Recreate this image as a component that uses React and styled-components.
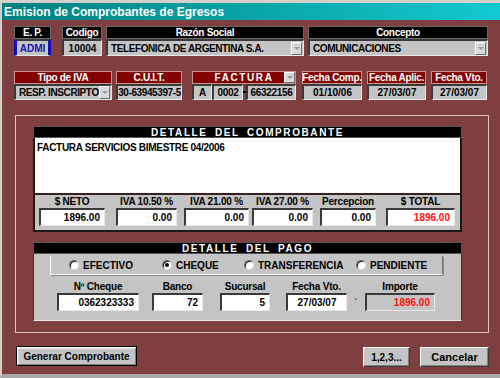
import styled, { createGlobalStyle } from 'styled-components';

const GlobalStyle = createGlobalStyle`
  body {
    margin: 0;
    font-family: "Liberation Sans", Arial, sans-serif;
  }
  * { box-sizing: border-box; }
`;

const Window = styled.div`
  width: 500px;
  height: 378px;
  background: #7f3f40;
  border-top: 3px solid #d4d0c8;
  border-left: 2px solid #d4d0c8;
  border-bottom: 4px solid #a8a8a8;
  display: flex;
  flex-direction: column;
  font-weight: bold;
  font-size: 10px;
`;

const TitleBar = styled.div`
  height: 17px;
  background: linear-gradient(to right, #00807f, #12c9d0);
  color: #fff;
  font-size: 12px;
  padding-left: 2px;
  display: flex;
  align-items: center;
`;

const Body = styled.div`
  flex: 1;
  display: flex;
  flex-direction: column;
  padding: 6px 0 0 12px;
`;

const Row = styled.div`
  display: flex;
  align-items: flex-start;
  margin-top: ${p => p.$mt || 0}px;
`;

const Field = styled.div`
  width: ${p => p.$w}px;
  margin-left: ${p => p.$ml || 0}px;
  display: flex;
  flex-direction: column;
`;

const HeadLabel = styled.div`
  height: 13px;
  background: ${p => (p.$red ? '#820202' : '#000')};
  border: 1px solid ${p => (p.$red ? '#c89090' : '#6a6a6a')};
  color: #fff;
  font-size: 10px;
  letter-spacing: ${p => p.$spread ?? -0.3}px;
  white-space: nowrap;
  display: flex;
  align-items: center;
  justify-content: center;
  position: relative;
`;

const Value = styled.div`
  height: ${p => p.$h || 17}px;
  width: ${p => (p.$w ? `${p.$w}px` : 'auto')};
  background: #c4c4c4;
  border-top: 2px solid #3a3a3a;
  border-left: 2px solid #3a3a3a;
  border-bottom: 1px solid #e8e8e8;
  border-right: 1px solid #e8e8e8;
  color: #000;
  display: flex;
  align-items: center;
  justify-content: ${p => p.$align || 'center'};
  padding: 0 3px;
  white-space: nowrap;
  overflow: hidden;
  letter-spacing: ${p => p.$ls || 0}px;
`;

const EpValue = styled(Value)`
  border-left: 3px solid #1010b8;
  border-right: 3px solid #1010b8;
  color: #1414b4;
`;

const ComboText = styled.span`
  flex: 1;
`;

const DropBtn = styled.span`
  width: 11px;
  height: 13px;
  background: #d8d8d8;
  border-top: 1px solid #fff;
  border-left: 1px solid #fff;
  border-bottom: 1px solid #707070;
  border-right: 1px solid #707070;
  display: flex;
  align-items: center;
  justify-content: center;
  flex-shrink: 0;
  margin-right: -2px;
  &::after {
    content: '';
    border-left: 3px solid transparent;
    border-right: 3px solid transparent;
    border-top: 3px solid #9a9a9a;
  }
`;

const LabelBtn = styled(DropBtn)`
  position: absolute;
  right: 0;
  top: 0;
  height: 11px;
  margin: 0;
`;

const Parts = styled.div`
  display: flex;
  align-items: center;
`;

const Dash = styled.span`
  width: 3px;
  height: 2px;
  background: #000;
`;

const Frame = styled.div`
  width: 474px;
  height: 218px;
  margin: 15px 0 0 1px;
  border: 1px solid #e2c4c4;
  padding: 10px 0 0 17px;
  display: flex;
  flex-direction: column;
`;

const Section = styled.div`
  width: 429px;
  margin-top: ${p => p.$mt || 0}px;
  display: flex;
  flex-direction: column;
`;

const SectionHead = styled.div`
  height: 12px;
  background: #000;
  border: 1px solid #555;
  color: #fff;
  font-size: 10px;
  letter-spacing: 1.6px;
  word-spacing: 3px;
  display: flex;
  align-items: center;
  justify-content: center;
`;

const TextArea = styled.div`
  height: 55px;
  background: #fff;
  border-left: 2px solid #1a1a1a;
  border-right: 2px solid #1a1a1a;
  padding: 4px 2px;
  color: #000;
  letter-spacing: -0.3px;
`;

const Totals = styled.div`
  height: 39px;
  background: #c4c4c4;
  border: 2px solid #1a1a1a;
  border-top-color: #3a2020;
  display: flex;
  padding: 1px 0 0 4px;
`;

const SmallField = styled.div`
  width: ${p => p.$w}px;
  margin-left: ${p => p.$ml || 0}px;
  display: flex;
  flex-direction: column;
`;

const SmallLabel = styled.div`
  height: 12px;
  color: #000;
  font-size: 10px;
  text-align: center;
  white-space: nowrap;
  line-height: 12px;
  letter-spacing: -0.2px;
`;

const Input = styled.div`
  height: 18px;
  background: ${p => (p.$gray ? '#c4c4c4' : '#fff')};
  border-top: 2px solid #3a3a3a;
  border-left: 2px solid #3a3a3a;
  border-bottom: 1px solid #e8e8e8;
  border-right: 1px solid #e8e8e8;
  color: ${p => (p.$red ? '#ff1010' : '#000')};
  display: flex;
  align-items: center;
  justify-content: ${p => (p.$center ? 'center' : 'flex-end')};
  padding: 0 4px;
`;

const PayPanel = styled.div`
  height: 67px;
  background: #c4c4c4;
  border-left: 1px solid #3a2a2a;
  border-right: 1px solid #3a2a2a;
  border-bottom: 1px solid #e8e8e8;
  display: flex;
  flex-direction: column;
  padding-top: 2px;
`;

const RadioBox = styled.div`
  width: 393px;
  height: 19px;
  margin-left: 16px;
  border-left: 1px solid #fff;
  border-bottom: 1px solid #fff;
  border-right: 1px solid #7a7a7a;
  box-shadow: 1px 1px 0 #8a8a8a;
  display: flex;
  align-items: center;
  padding-left: 18px;
`;

const RadioItem = styled.div`
  width: ${p => p.$w}px;
  display: flex;
  align-items: center;
  gap: 4px;
  color: #000;
`;

const Circle = styled.span`
  width: 10px;
  height: 10px;
  border-radius: 50%;
  background: #fff;
  border: 1px solid;
  border-color: #6a6a6a #e0e0e0 #e0e0e0 #6a6a6a;
  box-shadow: inset 1px 1px 0 #222;
  display: flex;
  align-items: center;
  justify-content: center;
  &::after {
    content: '';
    width: 4px;
    height: 4px;
    border-radius: 50%;
    background: ${p => (p.$on ? '#000' : 'transparent')};
  }
`;

const PayFields = styled.div`
  display: flex;
  align-items: flex-end;
  margin: 6px 0 0 23px;
`;

const Dot = styled.span`
  width: 18px;
  text-align: center;
  color: #555;
  padding-bottom: 6px;
`;

const Buttons = styled.div`
  display: flex;
  align-items: flex-start;
  margin-top: 13px;
  padding-left: 2px;
`;

const MainButton = styled.button`
  width: 121px;
  height: 20px;
  background: #c4c4c4;
  border: 1px solid #000;
  box-shadow: inset 1px 1px 0 #fff, inset -1px -1px 0 #808080, inset 2px 2px 0 #e0e0e0;
  font: bold 10px "Liberation Sans", Arial, sans-serif;
  color: #000;
  padding: 0;
`;

const Button = styled.button`
  width: ${p => p.$w}px;
  height: 20px;
  margin-left: ${p => p.$ml || 0}px;
  margin-top: 1px;
  background: #c4c4c4;
  border: 1px solid;
  border-color: #fff #3a3a3a #3a3a3a #fff;
  box-shadow: inset -1px -1px 0 #808080;
  font: bold ${p => p.$fs || 10}px "Liberation Sans", Arial, sans-serif;
  color: #000;
  padding: 0;
`;

const totals = [
  { label: '$ NETO', value: '1896.00', w: 66, ml: 0 },
  { label: 'IVA  10.50 %', value: '0.00', w: 61, ml: 11 },
  { label: 'IVA  21.00 %', value: '0.00', w: 65, ml: 7 },
  { label: 'IVA  27.00 %', value: '0.00', w: 61, ml: 3 },
  { label: 'Percepcion', value: '0.00', w: 56, ml: 7 },
  { label: '$ TOTAL', value: '1896.00', w: 69, ml: 10, red: true },
];

const radios = [
  { label: 'EFECTIVO', w: 93 },
  { label: 'CHEQUE', w: 82, on: true },
  { label: 'TRANSFERENCIA', w: 112 },
  { label: 'PENDIENTE', w: 80 },
];

export default function App() {
  return (
    <Window>
      <GlobalStyle />
      <TitleBar>Emision de Comprobantes de Egresos</TitleBar>
      <Body>
        <Row>
          <Field $w={37}>
            <HeadLabel>E. P.</HeadLabel>
            <EpValue>ADMI</EpValue>
          </Field>
          <Field $w={40} $ml={11}>
            <HeadLabel>Codigo</HeadLabel>
            <Value>10004</Value>
          </Field>
          <Field $w={198} $ml={4}>
            <HeadLabel>Razón Social</HeadLabel>
            <Value $align="flex-start" $ls={-0.4}>
              <ComboText>TELEFONICA DE ARGENTINA S.A.</ComboText>
              <DropBtn />
            </Value>
          </Field>
          <Field $w={180} $ml={4}>
            <HeadLabel>Concepto</HeadLabel>
            <Value $align="flex-start" $ls={-0.4}>
              <ComboText>COMUNICACIONES</ComboText>
              <DropBtn />
            </Value>
          </Field>
        </Row>

        <Row $mt={15}>
          <Field $w={98}>
            <HeadLabel $red>Tipo de IVA</HeadLabel>
            <Value $h={16} $align="flex-start" $ls={-0.4}>
              <ComboText>RESP. INSCRIPTO</ComboText>
              <DropBtn />
            </Value>
          </Field>
          <Field $w={66} $ml={4}>
            <HeadLabel $red>C.U.I.T.</HeadLabel>
            <Value $h={16} $ls={-0.4}>30-63945397-5</Value>
          </Field>
          <Field $w={104} $ml={10}>
            <HeadLabel $red $spread={1.6}>
              FACTURA
              <LabelBtn />
            </HeadLabel>
            <Parts>
              <Value $h={16} $w={20}>A</Value>
              <Value $h={16} $w={31} $ls={-0.3}>0002</Value>
              <Dash />
              <Value $h={16} $w={50} $ls={-0.3}>66322156</Value>
            </Parts>
          </Field>
          <Field $w={60} $ml={6}>
            <HeadLabel $red>Fecha Comp.</HeadLabel>
            <Value $h={16}>01/10/06</Value>
          </Field>
          <Field $w={59} $ml={5}>
            <HeadLabel $red>Fecha Aplic.</HeadLabel>
            <Value $h={16}>27/03/07</Value>
          </Field>
          <Field $w={56} $ml={5}>
            <HeadLabel $red>Fecha Vto.</HeadLabel>
            <Value $h={16}>27/03/07</Value>
          </Field>
        </Row>

        <Frame>
          <Section>
            <SectionHead>DETALLE DEL COMPROBANTE</SectionHead>
            <TextArea>FACTURA SERVICIOS BIMESTRE 04/2006</TextArea>
            <Totals>
              {totals.map(t => (
                <SmallField key={t.label} $w={t.w} $ml={t.ml}>
                  <SmallLabel>{t.label}</SmallLabel>
                  <Input $red={t.red}>{t.value}</Input>
                </SmallField>
              ))}
            </Totals>
          </Section>

          <Section $mt={10}>
            <SectionHead>DETALLE DEL PAGO</SectionHead>
            <PayPanel>
              <RadioBox>
                {radios.map(r => (
                  <RadioItem key={r.label} $w={r.w}>
                    <Circle $on={r.on} />
                    {r.label}
                  </RadioItem>
                ))}
              </RadioBox>
              <PayFields>
                <SmallField $w={82}>
                  <SmallLabel>Nº Cheque</SmallLabel>
                  <Input>0362323333</Input>
                </SmallField>
                <SmallField $w={51} $ml={13}>
                  <SmallLabel>Banco</SmallLabel>
                  <Input>72</Input>
                </SmallField>
                <SmallField $w={50} $ml={17}>
                  <SmallLabel>Sucursal</SmallLabel>
                  <Input>5</Input>
                </SmallField>
                <SmallField $w={61} $ml={16}>
                  <SmallLabel>Fecha Vto.</SmallLabel>
                  <Input $center>27/03/07</Input>
                </SmallField>
                <Dot>·</Dot>
                <SmallField $w={70}>
                  <SmallLabel>Importe</SmallLabel>
                  <Input $gray $red>1896.00</Input>
                </SmallField>
              </PayFields>
            </PayPanel>
          </Section>
        </Frame>

        <Buttons>
          <MainButton>Generar Comprobante</MainButton>
          <Button $w={47} $ml={226}>1,2,3...</Button>
          <Button $w={69} $ml={10} $fs={11}>Cancelar</Button>
        </Buttons>
      </Body>
    </Window>
  );
}
